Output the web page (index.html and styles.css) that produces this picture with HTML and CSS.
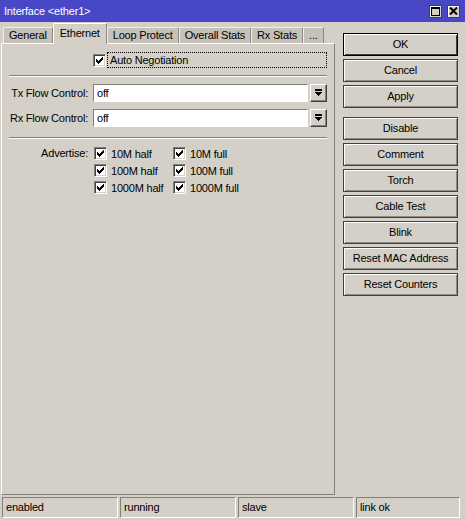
FILE: index.html
```html
<!DOCTYPE html>
<html lang="en">
<head>
  <meta charset="UTF-8">
  <title>Interface &lt;ether1&gt;</title>
  <link rel="stylesheet" href="styles.css">
</head>
<body>
  <div class="window">
    <div class="titlebar">
      <span class="title">Interface &lt;ether1&gt;</span>
      <div class="tb-btns">
        <span class="tb-btn">
          <svg width="9" height="9" viewBox="0 0 9 9" shape-rendering="crispEdges"><rect x="0.5" y="0.5" width="8" height="8" fill="none" stroke="#000"/><rect x="0" y="0" width="9" height="2" fill="#000"/></svg>
        </span>
        <span class="tb-btn">
          <svg width="9" height="8" viewBox="0 0 9 8"><path d="M1 0.5 L8 7.5 M8 0.5 L1 7.5" stroke="#000" stroke-width="2"/></svg>
        </span>
      </div>
    </div>

    <div class="main">
      <div class="left">
        <div class="tabs">
          <div class="tab">General</div>
          <div class="tab active">Ethernet</div>
          <div class="tab">Loop Protect</div>
          <div class="tab">Overall Stats</div>
          <div class="tab">Rx Stats</div>
          <div class="tab">...</div>
        </div>

        <div class="panel">
          <div class="check-row">
            <span class="box checked"></span>
            <span class="focus">Auto Negotiation</span>
          </div>

          <div class="sep"></div>

          <div class="field">
            <label>Tx Flow Control:</label>
            <div class="select">
              <div class="input">off</div>
              <span class="drop"><svg width="7" height="8" viewBox="0 0 7 8" shape-rendering="crispEdges"><rect x="0" y="0" width="7" height="2" fill="#000"/><path d="M0 3 H7 L3.5 7.5 Z" fill="#000"/></svg></span>
            </div>
          </div>
          <div class="field">
            <label>Rx Flow Control:</label>
            <div class="select">
              <div class="input">off</div>
              <span class="drop"><svg width="7" height="8" viewBox="0 0 7 8" shape-rendering="crispEdges"><rect x="0" y="0" width="7" height="2" fill="#000"/><path d="M0 3 H7 L3.5 7.5 Z" fill="#000"/></svg></span>
            </div>
          </div>

          <div class="sep sep-low"></div>

          <div class="field adv">
            <label>Advertise:</label>
            <div class="opts">
              <div class="opt"><span class="box checked"></span>10M half</div>
              <div class="opt"><span class="box checked"></span>10M full</div>
              <div class="opt"><span class="box checked"></span>100M half</div>
              <div class="opt"><span class="box checked"></span>100M full</div>
              <div class="opt"><span class="box checked"></span>1000M half</div>
              <div class="opt"><span class="box checked"></span>1000M full</div>
            </div>
          </div>
        </div>
      </div>

      <div class="actions">
        <div class="btn default">OK</div>
        <div class="btn">Cancel</div>
        <div class="btn">Apply</div>
        <div class="btn spaced">Disable</div>
        <div class="btn">Comment</div>
        <div class="btn">Torch</div>
        <div class="btn">Cable Test</div>
        <div class="btn">Blink</div>
        <div class="btn">Reset MAC Address</div>
        <div class="btn">Reset Counters</div>
      </div>
    </div>

    <div class="status">
      <div class="cell">enabled</div>
      <div class="cell">running</div>
      <div class="cell">slave</div>
      <div class="cell last">link ok</div>
    </div>
  </div>
</body>
</html>
```

FILE: styles.css
```css
* {
  box-sizing: border-box;
}

body {
  margin: 0;
  background: #d4d0c8;
  font: 11px "Liberation Sans", Arial, sans-serif;
  letter-spacing: -0.2px;
  color: #000;
}

.window {
  width: 465px;
  height: 520px;
  display: flex;
  flex-direction: column;
}

.titlebar {
  height: 22px;
  background: #4848c6;
  color: #fff;
  display: flex;
  align-items: center;
  justify-content: space-between;
  padding: 0 5px 0 4px;
}

.tb-btns {
  display: flex;
  gap: 5px;
}

.tb-btn {
  width: 13px;
  height: 13px;
  background: #d4d0c8;
  border: 1px solid #404040;
  box-shadow: inset 1px 1px #fff;
  display: flex;
  align-items: center;
  justify-content: center;
}

.main {
  flex: 1;
  display: flex;
  padding-bottom: 2px;
}

.left {
  width: 335px;
  padding-left: 1px;
  display: flex;
  flex-direction: column;
}

.tabs {
  height: 21px;
  display: flex;
  align-items: flex-end;
  padding-left: 2px;
}

.tab {
  height: 16px;
  line-height: 15px;
  padding: 0 5px;
  background: #c6c2ba;
  border-top: 1px solid #f0eee8;
  border-left: 1px solid #f0eee8;
  border-right: 1px solid #8a8882;
}

.tab.active {
  height: 21px;
  line-height: 19px;
  padding: 0 6px;
  background: #d4d0c8;
  border-top-color: #fff;
  border-left-color: #fff;
  margin-bottom: -1px;
  position: relative;
}

.panel {
  flex: 1;
  border-top: 1px solid #fff;
  border-left: 1px solid #fff;
  border-right: 1px solid #808080;
  border-bottom: 1px solid #808080;
  padding: 8px 7px 0 0;
}

.check-row {
  display: flex;
  align-items: center;
  height: 16px;
  margin-left: 91px;
}

.focus {
  flex: 1;
  height: 16px;
  line-height: 14px;
  margin-left: 1px;
  padding-left: 2px;
  border: 1px dotted #000;
}

.box {
  width: 13px;
  height: 13px;
  flex: none;
  background: #fff;
  border-top: 1px solid #808080;
  border-left: 1px solid #808080;
  border-right: 1px solid #fff;
  border-bottom: 1px solid #fff;
  box-shadow: inset 1px 1px #404040, inset -1px -1px #d4d0c8;
}

.box.checked {
  background: #fff url("data:image/svg+xml;utf8,<svg xmlns='http://www.w3.org/2000/svg' width='11' height='11' shape-rendering='crispEdges'><path d='M2 4 H3 V5 H4 V6 H5 V5 H6 V4 H7 V3 H8 V2 H9 V5 H8 V6 H7 V7 H6 V8 H5 V9 H4 V8 H3 V7 H2 Z' fill='black'/></svg>") no-repeat 0 0;
}

.sep {
  height: 2px;
  margin: 7px 0 7px 7px;
  border-top: 1px solid #808080;
  border-bottom: 1px solid #fff;
}

.sep-low {
  margin-top: 10px;
  margin-bottom: 7px;
}

.field {
  display: grid;
  grid-template-columns: 86px 1fr;
  column-gap: 5px;
  align-items: center;
  margin-bottom: 7px;
}

.field label {
  text-align: right;
}

.select {
  display: flex;
  gap: 2px;
}

.input {
  flex: 1;
  height: 18px;
  line-height: 16px;
  padding-left: 3px;
  background: #fff;
  border-top: 1px solid #808080;
  border-left: 1px solid #808080;
  border-right: 1px solid #fff;
  border-bottom: 1px solid #fff;
}

.drop {
  width: 17px;
  height: 18px;
  display: flex;
  align-items: center;
  justify-content: center;
  border: 1px solid #404040;
  border-top-color: #fff;
  border-left-color: #fff;
  box-shadow: inset -1px -1px #808080;
}

.adv {
  align-items: start;
}

.adv label {
  line-height: 15px;
}

.opts {
  display: grid;
  grid-template-columns: 79px auto;
  row-gap: 2px;
  margin-left: 1px;
}

.opt {
  display: flex;
  align-items: center;
  gap: 4px;
  height: 15px;
}

.actions {
  width: 115px;
  margin-left: 8px;
  padding-top: 11px;
  display: flex;
  flex-direction: column;
  gap: 3px;
}

.btn {
  height: 23px;
  line-height: 21px;
  text-align: center;
  border: 1px solid #404040;
  box-shadow: inset 1px 1px #fff, inset -1px -1px #8c8a84;
}

.btn.default {
  border-color: #000;
  box-shadow: inset 1px 1px #fff, inset -1px -1px #404040;
}

.btn.spaced {
  margin-top: 6px;
}

.status {
  height: 21px;
  display: flex;
  gap: 2px;
  padding: 0 5px 0 2px;
  margin-bottom: 2px;
}

.cell {
  width: 116px;
  line-height: 19px;
  padding-left: 3px;
  border-top: 1px solid #808080;
  border-left: 1px solid #808080;
  border-right: 1px solid #fff;
  border-bottom: 1px solid #fff;
}

.cell.last {
  flex: 1;
}
```
